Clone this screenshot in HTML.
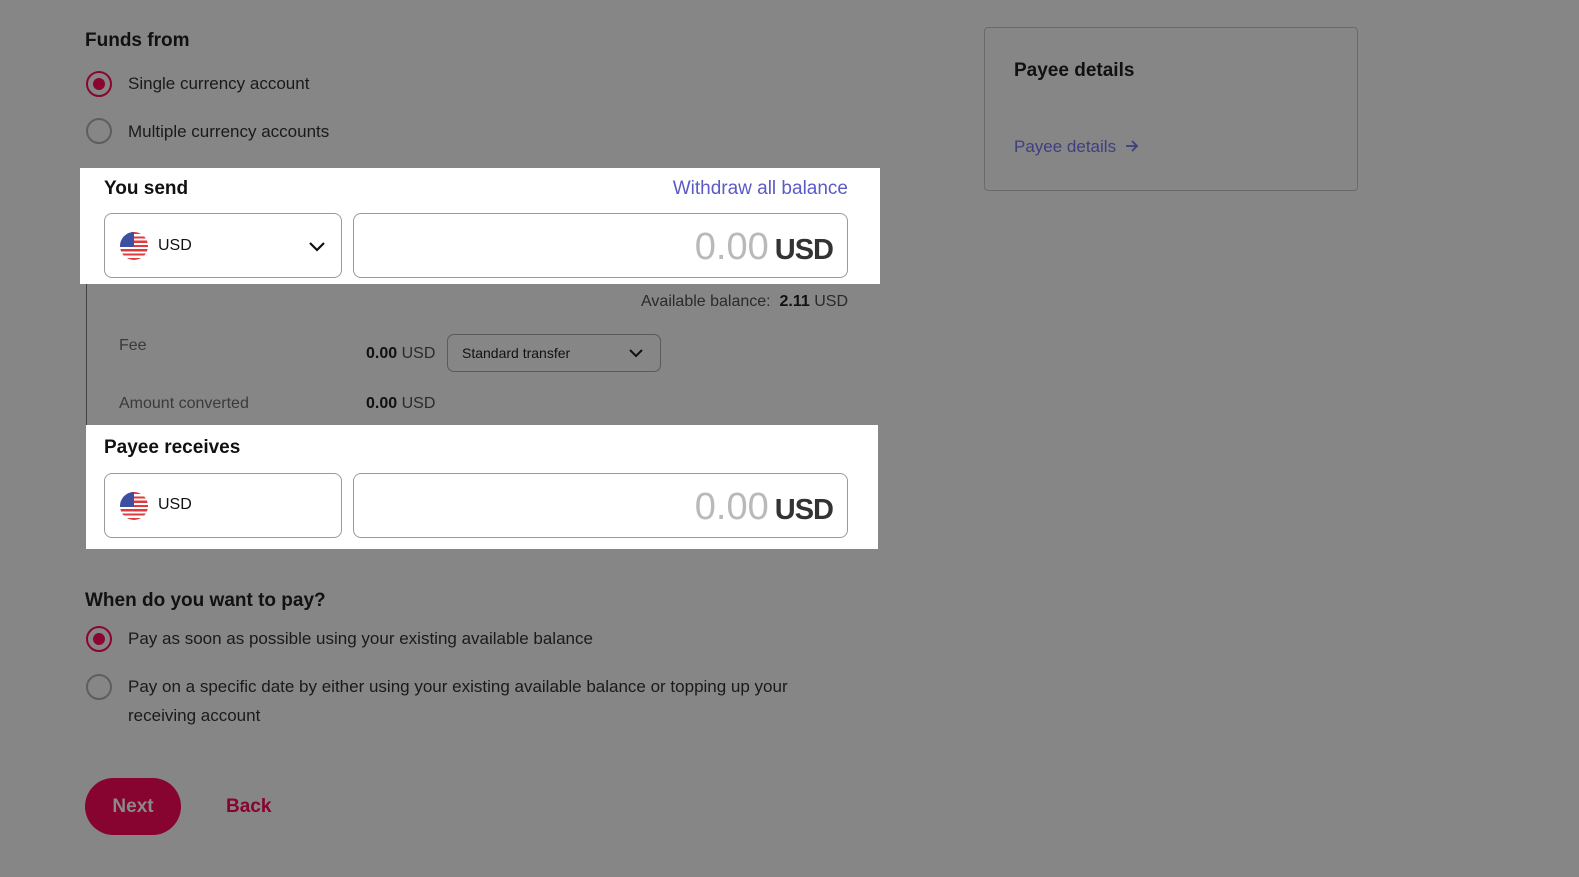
<!DOCTYPE html>
<html><head><style>
*{margin:0;padding:0;box-sizing:border-box}
body{width:1579px;height:877px;background:#868686;font-family:"Liberation Sans",Arial,sans-serif;position:relative;overflow:hidden;color:#111}
.a{position:absolute}
.radio{position:absolute;width:26px;height:26px;border-radius:50%;border:2px solid #5e5e5e}
.radio.on{border-color:#8a0530}
.radio.on::after{content:"";position:absolute;left:5px;top:5px;width:12px;height:12px;border-radius:50%;background:#8a0530}
.lbl{position:absolute;font-size:17px;color:#1a1a1a}
.box{position:absolute;border:1px solid #9a9a9a;border-radius:8px;background:#fff}
.flag{position:absolute;width:28px;height:28px;border-radius:50%;overflow:hidden;background:repeating-linear-gradient(#e03a3e 0 2.15px,#fff 2.15px 4.3px)}
.flag::before{content:"";position:absolute;left:0;top:0;width:14px;height:15px;background:#3c4fa0}
.amt{position:absolute;right:14px;top:12px;font-size:38px;color:#b9b9b9;white-space:nowrap}
.amt b{color:#333;font-size:29px;letter-spacing:-1px;margin-left:6px}
.chev{position:absolute}
</style></head><body>
<div class="a" style="left:85px;top:30px;font-size:19px;font-weight:bold">Funds from</div>
<div class="radio on" style="left:86px;top:71px"></div>
<div class="lbl" style="left:128px;top:74px">Single currency account</div>
<div class="radio" style="left:86px;top:118px"></div>
<div class="lbl" style="left:128px;top:122px">Multiple currency accounts</div>

<div class="a" style="left:86px;top:244px;width:1px;height:265px;background:#444"></div>
<div class="a" style="left:86px;top:244px;width:20px;height:1px;background:#444"></div>
<div class="a" style="left:86px;top:508px;width:20px;height:1px;background:#444"></div>

<div class="a" style="left:80px;top:168px;width:800px;height:116px;background:#fff"></div>
<div class="a" style="left:104px;top:178px;font-size:19px;font-weight:bold">You send</div>
<div class="a" style="right:731px;top:178px;font-size:19px;color:#5a5ac8">Withdraw all balance</div>
<div class="box" style="left:104px;top:213px;width:238px;height:65px">
 <div class="flag" style="left:15px;top:18px"></div>
 <div class="a" style="left:53px;top:23px;font-size:16px">USD</div>
 <svg class="chev" style="left:202px;top:26px" width="20" height="14" viewBox="0 0 20 14"><path d="M3 3l7 7 7-7" fill="none" stroke="#111" stroke-width="2.2"/></svg>
</div>
<div class="box" style="left:353px;top:213px;width:495px;height:65px"><div class="amt">0.00<b>USD</b></div></div>

<div class="a" style="right:731px;top:293px;font-size:16px;color:#2a2a2a">Available balance:&nbsp; <b style="color:#111">2.11</b> USD</div>
<div class="a" style="left:119px;top:337px;font-size:16px;color:#3a3a3a">Fee</div>
<div class="a" style="left:366px;top:345px;font-size:16px;color:#2a2a2a"><b style="color:#111">0.00</b> USD</div>
<div class="a" style="left:447px;top:334px;width:214px;height:38px;border:1px solid #5a5a5a;border-radius:7px">
 <div class="a" style="left:14px;top:10px;font-size:14px;color:#111">Standard transfer</div>
 <svg class="chev" style="left:179px;top:12px" width="18" height="12" viewBox="0 0 18 12"><path d="M3 3l6 6 6-6" fill="none" stroke="#111" stroke-width="2"/></svg>
</div>
<div class="a" style="left:119px;top:395px;font-size:16px;color:#3a3a3a">Amount converted</div>
<div class="a" style="left:366px;top:395px;font-size:16px;color:#2a2a2a"><b style="color:#111">0.00</b> USD</div>

<div class="a" style="left:86px;top:425px;width:792px;height:124px;background:#fff"></div>
<div class="a" style="left:104px;top:437px;font-size:19px;font-weight:bold">Payee receives</div>
<div class="box" style="left:104px;top:473px;width:238px;height:65px">
 <div class="flag" style="left:15px;top:18px"></div>
 <div class="a" style="left:53px;top:22px;font-size:16px">USD</div>
</div>
<div class="box" style="left:353px;top:473px;width:495px;height:65px"><div class="amt">0.00<b>USD</b></div></div>

<div class="a" style="left:85px;top:590px;font-size:19px;font-weight:bold">When do you want to pay?</div>
<div class="radio on" style="left:86px;top:626px"></div>
<div class="lbl" style="left:128px;top:629px">Pay as soon as possible using your existing available balance</div>
<div class="radio" style="left:86px;top:674px"></div>
<div class="lbl" style="left:128px;line-height:29px;top:672px">Pay on a specific date by either using your existing available balance or topping up your<br>receiving account</div>

<div class="a" style="left:85px;top:778px;width:96px;height:57px;border-radius:29px;background:#870330;color:#8a8a8a;font-size:19px;font-weight:bold;text-align:center;line-height:57px">Next</div>
<div class="a" style="left:226px;top:796px;font-size:19px;font-weight:bold;color:#870330">Back</div>

<div class="a" style="left:984px;top:27px;width:374px;height:164px;border:1px solid #6a6a6a;border-radius:4px"></div>
<div class="a" style="left:1014px;top:60px;font-size:19px;font-weight:bold">Payee details</div>
<div class="a" style="left:1014px;top:137px;font-size:17px;color:#3e3e80">Payee details</div>
<svg class="a" style="left:1124px;top:139px" width="16" height="14" viewBox="0 0 16 14"><path d="M2 7h11M8 2l5 5-5 5" fill="none" stroke="#3e3e80" stroke-width="1.8"/></svg>
</body></html>
